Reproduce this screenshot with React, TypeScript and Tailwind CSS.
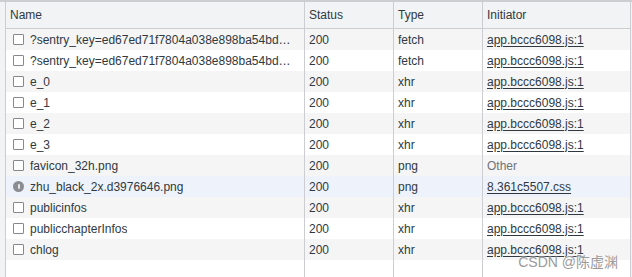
import React from 'react'

interface Req {
  name: string
  status: string
  type: string
  initiator: string
  link: boolean
  icon?: 'img'
  dim?: boolean
  selected?: boolean
}

const rows: Req[] = [
  { name: '?sentry_key=ed67ed71f7804a038e898ba54bd8a0e1&sentry_version=7', status: '200', type: 'fetch', initiator: 'app.bccc6098.js:1', link: true },
  { name: '?sentry_key=ed67ed71f7804a038e898ba54bd8a0e1&sentry_version=7', status: '200', type: 'fetch', initiator: 'app.bccc6098.js:1', link: true },
  { name: 'e_0', status: '200', type: 'xhr', initiator: 'app.bccc6098.js:1', link: true },
  { name: 'e_1', status: '200', type: 'xhr', initiator: 'app.bccc6098.js:1', link: true },
  { name: 'e_2', status: '200', type: 'xhr', initiator: 'app.bccc6098.js:1', link: true },
  { name: 'e_3', status: '200', type: 'xhr', initiator: 'app.bccc6098.js:1', link: true },
  { name: 'favicon_32h.png', status: '200', type: 'png', initiator: 'Other', link: false, dim: true },
  { name: 'zhu_black_2x.d3976646.png', status: '200', type: 'png', initiator: '8.361c5507.css', link: true, icon: 'img', selected: true },
  { name: 'publicinfos', status: '200', type: 'xhr', initiator: 'app.bccc6098.js:1', link: true },
  { name: 'publicchapterInfos', status: '200', type: 'xhr', initiator: 'app.bccc6098.js:1', link: true },
  { name: 'chlog', status: '200', type: 'xhr', initiator: 'app.bccc6098.js:1', link: true },
]

function Checkbox() {
  return <span className="block h-[11px] w-[11px] shrink-0 rounded-[1px] border border-[#85888c] bg-white" />
}

function ImgIcon() {
  return (
    <span className="flex h-[11px] w-[11px] shrink-0 items-center justify-center rounded-full bg-[#8a8d91]">
      <span className="h-[5px] w-[2px] rounded-full bg-[#e6e6e6]" />
    </span>
  )
}

const cell = 'flex min-w-0 items-center overflow-hidden border-r border-[#cbcdd1] px-[4px]'

export default function App() {
  return (
    <div
      className="relative flex h-[277px] w-[632px] flex-col border-t-2 border-[#cbcdd1] bg-[#f1f3f4] pl-[5px] pr-[1px] text-[12px] text-[#303942]"
      style={{ fontFamily: '"Liberation Sans", Arial, sans-serif' }}
    >
      <div className="flex h-full flex-col border-l border-[#cbcdd1] bg-white">
        <div className="flex h-[27px] shrink-0 border-b border-[#cbcdd1] bg-[#f1f3f4]">
          <div className={`${cell} w-[299px]`}>Name</div>
          <div className={`${cell} w-[89px]`}>Status</div>
          <div className={`${cell} w-[89px]`}>Type</div>
          <div className={`${cell} flex-1`}>Initiator</div>
        </div>

        {rows.map((r, i) => {
          const bg = r.selected ? 'bg-[#eef3fb]' : i % 2 === 0 ? 'bg-[#f5f5f5]' : 'bg-white'
          return (
            <div key={i} className={`flex h-[21px] shrink-0 ${bg}`}>
              <div className={`${cell} w-[299px] shrink-0 gap-[6px] pl-[7px] pr-[10px]`}>
                {r.icon === 'img' ? <ImgIcon /> : <Checkbox />}
                <span className="min-w-0 truncate">{r.name}</span>
              </div>
              <div className={`${cell} w-[89px] shrink-0`}>{r.status}</div>
              <div className={`${cell} w-[89px] shrink-0`}>{r.type}</div>
              <div className={`${cell} flex-1`}>
                {r.link ? (
                  <span className="underline underline-offset-[2px]">{r.initiator}</span>
                ) : (
                  <span className={r.dim ? 'text-[#6e7378]' : ''}>{r.initiator}</span>
                )}
              </div>
            </div>
          )
        })}

        <div className="flex flex-1">
          <div className={`${cell} w-[299px] shrink-0`} />
          <div className={`${cell} w-[89px] shrink-0`} />
          <div className={`${cell} w-[89px] shrink-0`} />
          <div className={`${cell} flex-1`} />
        </div>
      </div>

      <div
        className="pointer-events-none absolute bottom-[4px] right-[14px] text-[14px] text-[#9a9a9a]"
        style={{ fontFamily: '"Liberation Sans", "Noto Sans CJK SC", sans-serif', textShadow: '0 0 2px #fff, 0 0 2px #fff' }}
      >
        CSDN @陈虚渊
      </div>
    </div>
  )
}
